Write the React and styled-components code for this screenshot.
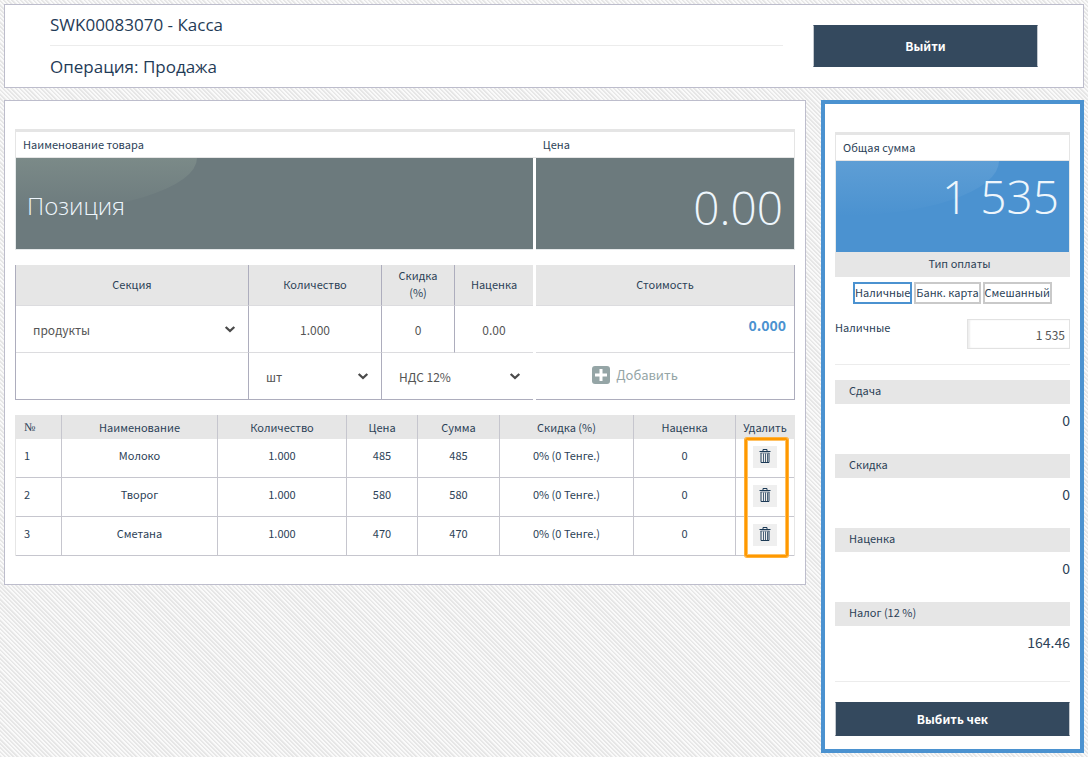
import React from 'react';
import styled, { createGlobalStyle } from 'styled-components';

const body = '"Noto Sans CJK SC", "Noto Sans", sans-serif';
const display = '"Open Sans", "Noto Sans", sans-serif';
const ink = '#2c4257';
const line = '#dcdcdf';
const edge = '#adadbd';

const GlobalStyle = createGlobalStyle`
  *, *::before, *::after { box-sizing: border-box; }
  body {
    margin: 0;
    color: ${ink};
    font: 11px/17px ${body};
    background: #f3f3f3 repeating-linear-gradient(45deg, #e6e6e6 0 1px, #fafafa 2px 3px);
  }
  button, input, select { font: inherit; color: inherit; margin: 0; border-radius: 0; }
  h1, h2, p { margin: 0; }
`;

const Page = styled.div`
  display: grid;
  grid-template-columns: minmax(0, 1fr) 263px;
  align-items: start;
  column-gap: 15px;
  row-gap: 12px;
  padding: 4px;
`;

const Header = styled.header`
  grid-column: 1 / -1;
  display: flex;
  gap: 30px;
  align-items: center;
  padding: 0 45px;
  background: #fff;
  border: 1px solid #bdbdcc;
`;

const Titles = styled.div`
  flex: 1;
`;

const Title = styled.h1`
  color: #1f3b57;
  font: 400 17px/40px ${display};
  & + & { border-top: 1px solid #ececec; line-height: 41px; }
`;

const Primary = styled.button`
  width: ${p => p.$width};
  height: ${p => p.$height};
  padding: 0 0 2px;
  border: 1px solid #34495e;
  border-color: #34495e #c3c8ce;
  background: #34495e;
  color: #fff;
  font-size: 12px;
  font-weight: 700;
  cursor: pointer;
`;

const Panel = styled.main`
  padding: 28px 10px;
  background: #fff;
  border: 1px solid #bdbdcc;
`;

const Checkout = styled.aside`
  padding: 28px 10px 13px;
  background: #fff;
  border: 4px solid #4b92d0;
`;

const Split = styled.div`
  display: grid;
  grid-template-columns: ${p => (p.$single ? '1fr' : '2fr 1fr')};
  column-gap: 3px;
`;

const CaptionBar = styled.div`
  grid-column: 1 / -1;
  display: grid;
  grid-template-columns: inherit;
  column-gap: 3px;
  height: 29px;
  border: solid #e5e5e5;
  border-width: 3px 1px 1px;
`;

const Caption = styled.label`
  padding: 4px 7px;
`;

const Tile = styled.div`
  position: relative;
  height: ${p => (p.$flush ? 91 : 92)}px;
  border: solid #e5e9ea;
  border-width: 0 ${p => (p.$right ? 1 : 0)}px ${p => (p.$flush ? 0 : 1)}px ${p => (p.$left ? 1 : 0)}px;
  background: ${p => p.$color};
  ${p => p.$shine && `
    &::before {
      content: '';
      position: absolute;
      top: 0;
      left: 0;
      width: ${p.$shine};
      height: 55px;
      border-bottom-right-radius: 100%;
      background: linear-gradient(${p.$shineColor}, ${p.$color});
    }
  `}
`;

const TileInput = styled.input`
  position: relative;
  display: block;
  width: 100%;
  height: 100%;
  padding: ${p => p.$pad};
  border: 0;
  background: none;
  color: #eef6fc;
  text-align: ${p => p.$align};
  font: 300 ${p => p.$size}/64px ${display};
  &::placeholder { color: inherit; opacity: 1; }
`;

const Entry = styled(Split)`
  margin-top: 15px;
`;

const EntryGrid = styled.div`
  display: grid;
  grid-template-columns: ${p => p.$cols};
  grid-template-rows: 41px 47px 46px;
  border: solid ${edge};
  border-width: 0 ${p => (p.$right ? 1 : 0)}px 1px ${p => (p.$left ? 1 : 0)}px;
`;

const Cell = styled.div`
  grid-column: span ${p => p.$span || 1};
  display: flex;
  align-items: center;
  justify-content: center;
  text-align: center;
  min-width: 0;
  padding-bottom: ${p => (p.$head ? 2 : 0)}px;
  border: solid;
  border-width: 0 ${p => (p.$edge ? 1 : 0)}px ${p => (p.$last ? 0 : 1)}px 0;
  border-color: ${line} ${edge};
  background: ${p => (p.$head ? '#e6e6e6' : '#fff')};
`;

const CellInput = styled.input`
  width: 100%;
  height: 100%;
  padding: 0;
  border: 0;
  background: none;
  color: #555;
  text-align: center;
  font-size: 12px;
`;

const SelectBox = styled.div`
  position: relative;
  width: 100%;
  height: 100%;
  svg { position: absolute; right: 12px; top: 18px; pointer-events: none; }
`;

const Select = styled.select`
  appearance: none;
  width: 100%;
  height: 100%;
  padding: 0 32px 0 17px;
  border: 0;
  background: none;
  color: #555;
  font-size: 12px;
`;

const Cost = styled.output`
  flex: 1;
  padding: 0 8px 8px;
  color: #4b92d0;
  text-align: right;
  font-size: 14px;
  font-weight: 700;
`;

const AddButton = styled.button`
  display: flex;
  align-items: center;
  gap: 6px;
  padding: 0 60px 3px 0;
  border: 0;
  background: none;
  color: #95a5a6;
  font-size: 13px;
  cursor: pointer;
`;

const Items = styled.div`
  position: relative;
  margin-top: 15px;
`;

const Table = styled.table`
  width: 100%;
  table-layout: fixed;
  border-collapse: separate;
  border-spacing: 0;
  border: solid #e6e6e6;
  border-width: 0 1px;
`;

const Th = styled.th`
  height: 24px;
  padding: 0;
  background: #e6e6e6;
  font-weight: 400;
  white-space: nowrap;
  border-right: 1px solid #c6c6ce;
  &:last-child { border-right: 0; }
  &:first-child { text-align: left; padding-left: 8px; font-family: "Liberation Serif", serif; font-size: 12px; }
`;

const Td = styled.td`
  height: 39px;
  padding: 0 0 6px;
  text-align: center;
  border: solid #c6c6ce;
  border-width: 0 1px 1px 0;
  &:last-child { border-right-width: 0; padding: 0 0 2px; }
  &:first-child { text-align: left; padding-left: 8px; }
`;

const DeleteButton = styled.button`
  display: flex;
  justify-content: center;
  width: 24px;
  height: 22px;
  margin: 0 auto;
  padding: 3px 0 0;
  border: 0;
  background: #efefef;
  cursor: pointer;
`;

const Highlight = styled.div`
  position: absolute;
  top: 23px;
  right: 7px;
  width: 43px;
  height: 119px;
  border: 2px solid #ff9900;
  border-radius: 2px;
  box-shadow: 0 0 0 1px #ffb13b, inset 0 0 0 1px #ffc266;
  pointer-events: none;
`;

const PayHeading = styled.h2`
  height: 25px;
  padding-left: 14px;
  background: #e6e6e6;
  text-align: center;
  font: inherit;
  line-height: 23px;
`;

const PayTypes = styled.div`
  display: flex;
  justify-content: center;
  gap: 2px;
  margin-top: 5px;
`;

const PayType = styled.button`
  height: 22px;
  padding: 0 0 2px;
  border: 2px solid ${p => (p.$active ? '#4b92d0' : '#c9c9c9')};
  background: #fff;
  white-space: nowrap;
  cursor: pointer;
`;

const CashRow = styled.div`
  display: flex;
  justify-content: space-between;
  padding: 15px 0;
  border-bottom: 1px solid #ececec;
`;

const CashInput = styled.input`
  width: 103px;
  height: 30px;
  padding: 0 4px;
  border: 1px solid #e2e2e2;
  box-shadow: inset 2px 0 2px #eee;
  color: #555;
  text-align: right;
  font-size: 12px;
`;

const Totals = styled.dl`
  margin: 15px 0 0;
  border-bottom: 1px solid #ececec;
`;

const TotalName = styled.dt`
  height: 24px;
  padding-left: 14px;
  background: #e6e6e6;
  line-height: 21px;
`;

const TotalValue = styled.dd`
  height: 50px;
  margin: 0;
  text-align: right;
  font-size: 14px;
  line-height: 32px;
  &:last-child { height: 55px; }
`;

const PrintArea = styled.div`
  padding-top: 20px;
`;

const Chevron = () => (
  <svg width="12" height="11" viewBox="0 0 12 11" aria-hidden="true">
    <path d="M1.7 3 6 7 10.3 3" fill="none" stroke="#4a4a4a" strokeWidth="2.3" />
  </svg>
);

const PlusSquare = () => (
  <svg width="18" height="18" viewBox="0 0 18 18" aria-hidden="true">
    <rect width="18" height="18" rx="3" fill="#95a5a6" />
    <path d="M9 3v12M3 9h12" stroke="#fff" strokeWidth="3" />
  </svg>
);

const Trash = () => (
  <svg width="12" height="14" viewBox="0 0 12 14" aria-hidden="true">
    <g fill="none" stroke="#1d3b57">
      <path d="M4 2V.5h4V2M.5 2.5h11M2 4v9.5h8V4" />
      <path d="M4.5 4.5v8.5M6.5 4.5v8.5M8.5 4.5v8.5" strokeWidth=".8" />
      <path d="M1.5 4h9" strokeWidth=".6" />
    </g>
  </svg>
);

const Dropdown = ({ label, value }) => (
  <SelectBox>
    <Select aria-label={label} defaultValue={value}>
      <option>{value}</option>
    </Select>
    <Chevron />
  </SelectBox>
);

const columns = [
  ['№', 46], ['Наименование', 156], ['Количество', 129], ['Цена', 71],
  ['Сумма', 82], ['Скидка (%)', 134], ['Наценка', 102], ['Удалить', 58],
];

const items = [
  ['1', 'Молоко', '1.000', '485', '485', '0% (0 Тенге.)', '0'],
  ['2', 'Творог', '1.000', '580', '580', '0% (0 Тенге.)', '0'],
  ['3', 'Сметана', '1.000', '470', '470', '0% (0 Тенге.)', '0'],
];

const payTypes = ['Наличные', 'Банк. карта', 'Смешанный'];

const totals = [
  ['Сдача', '0'], ['Скидка', '0'], ['Наценка', '0'], ['Налог (12 %)', '164.46'],
];

export default function App() {
  return (
    <>
      <GlobalStyle />
      <Page>
        <Header>
          <Titles>
            <Title>SWK00083070 - Касса</Title>
            <Title as="h2">Операция: Продажа</Title>
          </Titles>
          <Primary type="button" $width="225px" $height="42px">Выйти</Primary>
        </Header>

        <Panel>
          <Split>
            <CaptionBar>
              <Caption htmlFor="item">Наименование товара</Caption>
              <Caption htmlFor="price">Цена</Caption>
            </CaptionBar>
            <Tile $left $color="#6c7a7d" $shine="35%" $shineColor="#7b8a88">
              <TileInput id="item" placeholder="Позиция" $size="24px" $align="left" $pad="4px 11px 0" />
            </Tile>
            <Tile $right $color="#6c7a7d">
              <TileInput id="price" defaultValue="0.00" $size="46px" $align="right" $pad="6px 11px 0" />
            </Tile>
          </Split>

          <Entry>
            <EntryGrid $left $cols="233fr 133fr 73fr 78fr">
              <Cell $head $edge>Секция</Cell>
              <Cell $head $edge>Количество</Cell>
              <Cell $head $edge>Скидка<br />(%)</Cell>
              <Cell $head>Наценка</Cell>
              <Cell $edge><Dropdown label="Секция" value="продукты" /></Cell>
              <Cell $edge><CellInput aria-label="Количество" defaultValue="1.000" /></Cell>
              <Cell $edge><CellInput aria-label="Скидка (%)" defaultValue="0" /></Cell>
              <Cell><CellInput aria-label="Наценка" defaultValue="0.00" /></Cell>
              <Cell $edge $last />
              <Cell $edge $last><Dropdown label="Единица" value="шт" /></Cell>
              <Cell $span={2} $last><Dropdown label="Налог" value="НДС 12%" /></Cell>
            </EntryGrid>
            <EntryGrid $right $cols="1fr">
              <Cell $head>Стоимость</Cell>
              <Cell><Cost>0.000</Cost></Cell>
              <Cell $last><AddButton type="button"><PlusSquare />Добавить</AddButton></Cell>
            </EntryGrid>
          </Entry>

          <Items>
            <Table>
              <colgroup>
                {columns.map(([name, width]) => <col key={name} width={width} />)}
              </colgroup>
              <thead>
                <tr>{columns.map(([name]) => <Th key={name} scope="col">{name}</Th>)}</tr>
              </thead>
              <tbody>
                {items.map(row => (
                  <tr key={row[0]}>
                    {row.map((value, i) => <Td key={i}>{value}</Td>)}
                    <Td><DeleteButton type="button" aria-label="Удалить"><Trash /></DeleteButton></Td>
                  </tr>
                ))}
              </tbody>
            </Table>
            <Highlight />
          </Items>
        </Panel>

        <Checkout>
          <Split $single>
            <CaptionBar>
              <Caption htmlFor="total">Общая сумма</Caption>
            </CaptionBar>
            <Tile $left $right $flush $color="#4b92d0" $shine="70%" $shineColor="#5e9ed5">
              <TileInput id="total" readOnly value="1 535" $size="46px" $align="right" $pad="0 10px 21px" />
            </Tile>
          </Split>
          <PayHeading>Тип оплаты</PayHeading>
          <PayTypes>
            {payTypes.map((name, i) => (
              <PayType key={name} type="button" $active={i === 0}>{name}</PayType>
            ))}
          </PayTypes>
          <CashRow>
            <label htmlFor="cash">Наличные</label>
            <CashInput id="cash" defaultValue="1 535" />
          </CashRow>
          <Totals>
            {totals.map(([name, value]) => (
              <React.Fragment key={name}>
                <TotalName>{name}</TotalName>
                <TotalValue>{value}</TotalValue>
              </React.Fragment>
            ))}
          </Totals>
          <PrintArea>
            <Primary type="button" $width="100%" $height="34px">Выбить чек</Primary>
          </PrintArea>
        </Checkout>
      </Page>
    </>
  );
}
